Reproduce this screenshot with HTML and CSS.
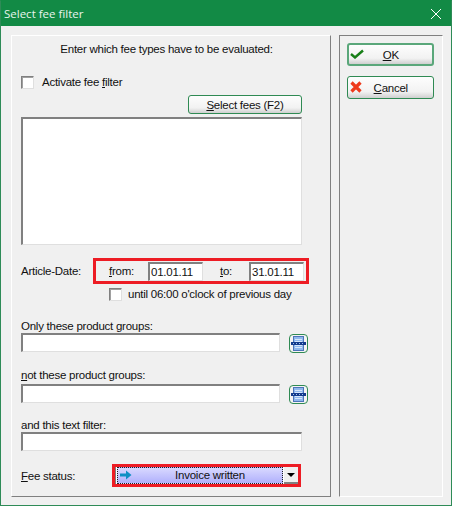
FILE: index.html
```html
<!DOCTYPE html>
<html lang="en">
<head>
<meta charset="UTF-8" />
<title>Select fee filter</title>
<link rel="stylesheet" href="styles.css">
</head>
<body>
<div class="window">

  <!-- Title bar -->
  <div class="titlebar">
    <span class="title">Select fee filter</span>
    <svg class="close" width="12" height="12" viewBox="0 0 12 12"><path d="M1 1L11 11M11 1L1 11" stroke="#fff" stroke-width="1" fill="none"/></svg>
  </div>

  <div class="content">

    <!-- Filter form -->
    <div class="panel-main">
      <div class="intro">Enter which fee types have to be evaluated:</div>

      <label class="check-row activate"><span class="checkbox"></span><span class="check-text">Activate fee <u>f</u>ilter</span></label>

      <div class="select-row">
        <div class="btn btn-select"><span><u>S</u>elect fees (F2)</span></div>
      </div>

      <div class="sunken listbox"></div>

      <div class="date-row">
        <span class="date-label">Article-Date:</span>
        <div class="highlight date-box">
          <span class="from"><u>f</u>rom:</span>
          <div class="sunken date-input">01.01.11</div>
          <span class="to"><u>t</u>o:</span>
          <div class="sunken date-input">31.01.11</div>
        </div>
      </div>

      <label class="check-row until"><span class="checkbox"></span><span class="check-text">until 06:00 o'clock of previous day</span></label>

      <div class="field-label first-group">Only these product groups:</div>
      <div class="group-row">
        <div class="sunken group-input"></div>
        <div class="btn-icon">
          <svg width="15" height="15" viewBox="0 0 15 15">
            <rect x="2.5" y="0.5" width="10" height="14" fill="#8fb8ee" stroke="#4d74b8"/>
            <path d="M4 3.5H11M4 5.5H11M4 9.5H11M4 11.5H11" stroke="#d6e6fb"/>
            <rect x="0" y="6" width="15" height="3" fill="#123a8c"/>
            <path d="M2 7.5H13" stroke="#9fc0ee" stroke-dasharray="1 2"/>
          </svg>
        </div>
      </div>

      <div class="field-label second-group"><u>n</u>ot these product groups:</div>
      <div class="group-row">
        <div class="sunken group-input"></div>
        <div class="btn-icon">
          <svg width="15" height="15" viewBox="0 0 15 15">
            <rect x="2.5" y="0.5" width="10" height="14" fill="#8fb8ee" stroke="#4d74b8"/>
            <path d="M4 3.5H11M4 5.5H11M4 9.5H11M4 11.5H11" stroke="#d6e6fb"/>
            <rect x="0" y="6" width="15" height="3" fill="#123a8c"/>
            <path d="M2 7.5H13" stroke="#9fc0ee" stroke-dasharray="1 2"/>
          </svg>
        </div>
      </div>

      <div class="field-label text-filter">and this text filter:</div>
      <div class="sunken text-input"></div>

      <div class="status-row">
        <span class="status-label"><u>F</u>ee status:</span>
        <div class="highlight status-box">
          <div class="combo">
            <div class="combo-value">
              <svg class="combo-arrow" width="12" height="10" viewBox="0 0 12 10"><path d="M0 3.5H6V0.5L11.5 5L6 9.5V6.5H0Z" fill="#0f8fc4"/></svg>
              Invoice written
            </div>
            <div class="combo-drop"><span class="caret"></span></div>
          </div>
        </div>
      </div>
    </div>

    <!-- OK / Cancel -->
    <div class="panel-side">
      <div class="btn btn-side btn-ok">
        <svg class="btn-glyph" width="14" height="10" viewBox="0 0 14 10"><path d="M1 5L5 8.5L13 1.5" stroke="#187f18" stroke-width="2.4" fill="none"/></svg>
        <span><u>O</u>K</span>
      </div>
      <div class="btn btn-side btn-cancel">
        <svg class="btn-glyph" width="12" height="12" viewBox="0 0 12 12"><path d="M1.5 1.5L10.5 10.5M10.5 1.5L1.5 10.5" stroke="#ee3a1c" stroke-width="3.2" fill="none"/></svg>
        <span><u>C</u>ancel</span>
      </div>
    </div>

  </div>
</div>
</body>
</html>
```

FILE: styles.css
```css
html, body {
  margin: 0;
  padding: 0;
}
body {
  width: 452px;
  height: 506px;
  overflow: hidden;
  font-family: "Liberation Sans", Arial, sans-serif;
  font-size: 11.5px;
  letter-spacing: -0.25px;
  color: #111;
}
.window {
  box-sizing: border-box;
  width: 452px;
  height: 506px;
  border: 1px solid #2e8b57;
  border-top-color: #128a45;
  background: #f0f0f0;
  display: flex;
  flex-direction: column;
}
.titlebar {
  height: 25px;
  background: #128a45;
  display: flex;
  align-items: center;
  justify-content: space-between;
  padding: 0 9px 0 3px;
  flex: none;
}
.title {
  font-family: "Open Sans", sans-serif;
  font-size: 11.5px;
  letter-spacing: 0;
  color: #e8f4ec;
}
.content {
  display: flex;
  padding: 9px 8px 8px 10px;
  flex: 1;
  min-height: 0;
}

/* Main panel */
.panel-main {
  box-sizing: border-box;
  width: 321px;
  height: 462px;
  border: 1px solid;
  border-color: #fff #808080 #808080 #fff;
  padding: 0 9px;
  display: flex;
  flex-direction: column;
}
.panel-side {
  box-sizing: border-box;
  width: 104px;
  height: 462px;
  margin-left: 8px;
  border: 1px solid;
  border-color: #808080 #fff #fff #808080;
  padding: 7px 0 0 7px;
  display: flex;
  flex-direction: column;
}
.intro {
  text-align: center;
  margin-top: 6px;
  line-height: 14px;
  width: 291px;
}
.check-row {
  display: flex;
  align-items: center;
  height: 13px;
  white-space: nowrap;
}
.check-text {
  margin-top: -1px;
}
.checkbox {
  box-sizing: border-box;
  width: 13px;
  height: 13px;
  background: #fff;
  border: 1px solid;
  border-color: #808080 #dfdfdf #dfdfdf #808080;
  box-shadow: inset 1px 1px 0 #a0a0a0;
  margin-right: 8px;
  flex: none;
}
.activate {
  margin-top: 20px;
}
.select-row {
  display: flex;
  width: 281px;
  justify-content: flex-end;
  margin-top: 6px;
}
.btn {
  box-sizing: border-box;
  border: 1px solid #2f8a53;
  border-radius: 3px;
  background: linear-gradient(#fdfdfd 0%, #f2f2f2 70%, #cfcfcf 100%);
  display: flex;
  align-items: center;
  justify-content: center;
}
.btn-select {
  width: 114px;
  height: 19px;
}
.sunken {
  box-sizing: border-box;
  background: #fff;
  border: 2px solid;
  border-color: #808080 #dfdfdf #dfdfdf #808080;
  border-right-width: 1px;
  border-bottom-width: 1px;
  line-height: 16px;
}
.listbox {
  width: 281px;
  height: 128px;
  margin-top: 3px;
}

/* Date row */
.date-row {
  display: flex;
  align-items: center;
  margin-top: 13px;
}
.date-label {
  width: 72px;
  flex: none;
}
.highlight {
  box-sizing: border-box;
  border: 3px solid #ed1c24;
  flex: none;
}
.date-box {
  width: 216px;
  height: 26px;
  display: flex;
  align-items: center;
  padding-left: 13px;
}
.from {
  width: 39px;
}
.to {
  width: 29px;
  margin-left: 17px;
}
.date-input {
  width: 55px;
  height: 19px;
  padding-left: 1px;
}
.until {
  margin-top: 4px;
  margin-left: 88px;
}
.until .checkbox {
  margin-right: 6px;
}

/* Product groups */
.field-label {
  line-height: 14px;
}
.first-group {
  margin-top: 18px;
}
.second-group {
  margin-top: 15px;
  margin-bottom: 2px;
}
.text-filter {
  margin-top: 14px;
}
.group-row {
  display: flex;
}
.group-input {
  width: 259px;
  height: 19px;
}
.btn-icon {
  box-sizing: border-box;
  width: 19px;
  height: 19px;
  margin: 1px 0 0 9px;
  border: 1px solid #2f8a53;
  border-radius: 4px;
  background: #f4f4f4;
  display: flex;
  align-items: center;
  justify-content: center;
}
.text-input {
  width: 281px;
  height: 19px;
}

/* Fee status */
.status-row {
  display: flex;
  align-items: center;
  margin-top: 13px;
}
.status-label {
  width: 91px;
  flex: none;
}
.status-box {
  width: 189px;
  height: 23px;
}
.combo {
  display: flex;
  height: 17px;
  background: #fff;
  border-left: 1px solid #808080;
}
.combo-value {
  flex: 1;
  position: relative;
  box-sizing: border-box;
  margin: 0 1px;
  border: 1px dotted #222;
  background: linear-gradient(#d8d8ff, #b0b0fc);
  text-align: center;
  line-height: 15px;
  padding-left: 20px;
}
.combo-arrow {
  position: absolute;
  left: 2px;
  top: 2px;
}
.combo-drop {
  width: 14px;
  background: #f0f0f0;
  border-bottom: 2px solid #808080;
  box-sizing: border-box;
  display: flex;
  align-items: center;
  justify-content: center;
}
.caret {
  width: 0;
  height: 0;
  border-left: 4px solid transparent;
  border-right: 4px solid transparent;
  border-top: 4px solid #000;
}

/* Side buttons */
.btn-side {
  width: 87px;
  height: 23px;
  position: relative;
}
.btn-ok {
  border-width: 2px;
  border-color: #5aa77a;
}
.btn-cancel {
  margin-top: 10px;
}
.btn-glyph {
  position: absolute;
}
.btn-ok .btn-glyph {
  left: 1px;
  top: 4px;
}
.btn-cancel .btn-glyph {
  left: 2px;
  top: 4px;
}
```
